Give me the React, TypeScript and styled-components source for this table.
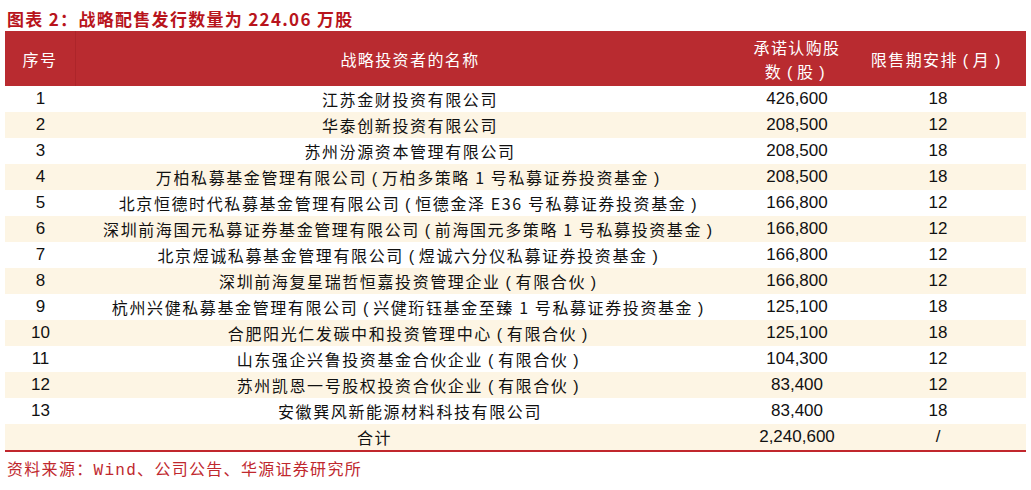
import { Fragment, type ReactNode } from "react";
import styled, { createGlobalStyle } from "styled-components";

const GlobalStyle = createGlobalStyle`
  html, body {
    margin: 0;
    padding: 0;
    background: #ffffff;
  }
  body {
    font-family: "Liberation Sans", "Noto Sans CJK SC", sans-serif;
  }
`;

type Row = {
  no: number;
  name: string;
  shares: string;
  months: string;
};

const rows: Row[] = [
  { no: 1, name: "江苏金财投资有限公司", shares: "426,600", months: "18" },
  { no: 2, name: "华泰创新投资有限公司", shares: "208,500", months: "12" },
  { no: 3, name: "苏州汾源资本管理有限公司", shares: "208,500", months: "18" },
  { no: 4, name: "万柏私募基金管理有限公司（万柏多策略 1 号私募证券投资基金）", shares: "208,500", months: "18" },
  { no: 5, name: "北京恒德时代私募基金管理有限公司（恒德金泽 E36 号私募证券投资基金）", shares: "166,800", months: "12" },
  { no: 6, name: "深圳前海国元私募证券基金管理有限公司（前海国元多策略 1 号私募投资基金）", shares: "166,800", months: "12" },
  { no: 7, name: "北京煜诚私募基金管理有限公司（煜诚六分仪私募证券投资基金）", shares: "166,800", months: "12" },
  { no: 8, name: "深圳前海复星瑞哲恒嘉投资管理企业（有限合伙）", shares: "166,800", months: "12" },
  { no: 9, name: "杭州兴健私募基金管理有限公司（兴健珩钰基金至臻 1 号私募证券投资基金）", shares: "125,100", months: "18" },
  { no: 10, name: "合肥阳光仁发碳中和投资管理中心（有限合伙）", shares: "125,100", months: "18" },
  { no: 11, name: "山东强企兴鲁投资基金合伙企业（有限合伙）", shares: "104,300", months: "12" },
  { no: 12, name: "苏州凯恩一号股权投资合伙企业（有限合伙）", shares: "83,400", months: "12" },
  { no: 13, name: "安徽巽风新能源材料科技有限公司", shares: "83,400", months: "18" },
];

const Page = styled.div`
  width: 1031px;
  height: 490px;
  padding: 7px 5px 0;
  box-sizing: border-box;
  overflow: hidden;
`;

const Title = styled.div`
  font-family: "Noto Sans CJK SC", sans-serif;
  font-weight: 700;
  font-size: 17px;
  letter-spacing: 1.3px;
  line-height: 24px;
  color: #b8141c;
  padding-left: 2px;
`;

const Table = styled.table`
  width: 1021px;
  border-collapse: separate;
  border-spacing: 0;
  table-layout: fixed;
`;

const HeadRow = styled.tr`
  background: #b92b30;
  height: 55px;
`;

const Th = styled.th<{ $divider?: boolean }>`
  color: #ffffff;
  font-family: "Noto Sans CJK SC", sans-serif;
  font-weight: 400;
  font-size: 16px;
  letter-spacing: 1.4px;
  line-height: 24px;
  text-align: center;
  padding: 0;
  border-right: ${(p) => (p.$divider ? "1px solid #ad252a" : "none")};
`;

const BodyRow = styled.tr<{ $striped: boolean; $last?: boolean }>`
  height: 26px;
  background: ${(p) => (p.$striped ? "#fdf5e4" : "#ffffff")};

  & > td {
    border-bottom: ${(p) => (p.$last ? "2px solid #c1272d" : "none")};
  }
`;

const Td = styled.td<{ $cjk?: boolean }>`
  padding: 0;
  text-align: center;
  color: #111111;
  font-family: ${(p) =>
    p.$cjk
      ? `"Noto Sans CJK SC", sans-serif`
      : `"Liberation Sans", "Noto Sans CJK SC", sans-serif`};
  font-size: ${(p) => (p.$cjk ? "16px" : "17px")};
  letter-spacing: ${(p) => (p.$cjk ? "1.6px" : "0")};
  line-height: 26px;
  white-space: nowrap;
`;

// fullwidth brackets drawn centred in their em box, as in the source chart
const Paren = styled.span`
  padding: 0 0.3em;
  font-family: "Liberation Sans", sans-serif;
  line-height: 1;
  letter-spacing: 0;
`;

const Source = styled.div`
  font-family: "Liberation Mono", "Noto Sans CJK SC", monospace;
  font-size: 16px;
  letter-spacing: 1.3px;
  line-height: 24px;
  color: #c0282e;
  padding: 7px 0 0 2px;
`;

function withParens(text: string): ReactNode {
  return text.split(/([（）])/).map((part, i) =>
    part === "（" ? (
      <Paren key={i}>(</Paren>
    ) : part === "）" ? (
      <Paren key={i}>)</Paren>
    ) : (
      <Fragment key={i}>{part}</Fragment>
    )
  );
}

export default function App() {
  return (
    <>
      <GlobalStyle />
      <Page>
        <Title>图表 2：战略配售发行数量为 224.06 万股</Title>
        <Table>
          <colgroup>
            <col style={{ width: 71 }} />
            <col style={{ width: 668 }} />
            <col style={{ width: 106 }} />
            <col style={{ width: 176 }} />
          </colgroup>
          <thead>
            <HeadRow>
              <Th $divider>序号</Th>
              <Th>战略投资者的名称</Th>
              <Th>
                承诺认购股
                <br />
                {withParens("数（股）")}
              </Th>
              <Th>{withParens("限售期安排（月）")}</Th>
            </HeadRow>
          </thead>
          <tbody>
            {rows.map((r, i) => (
              <BodyRow key={r.no} $striped={i % 2 === 1}>
                <Td>{r.no}</Td>
                <Td $cjk>{withParens(r.name)}</Td>
                <Td>{r.shares}</Td>
                <Td>{r.months}</Td>
              </BodyRow>
            ))}
            <BodyRow $striped $last>
              <Td $cjk colSpan={2}>
                合计
              </Td>
              <Td>2,240,600</Td>
              <Td>/</Td>
            </BodyRow>
          </tbody>
        </Table>
        <Source>资料来源：Wind、公司公告、华源证券研究所</Source>
      </Page>
    </>
  );
}
